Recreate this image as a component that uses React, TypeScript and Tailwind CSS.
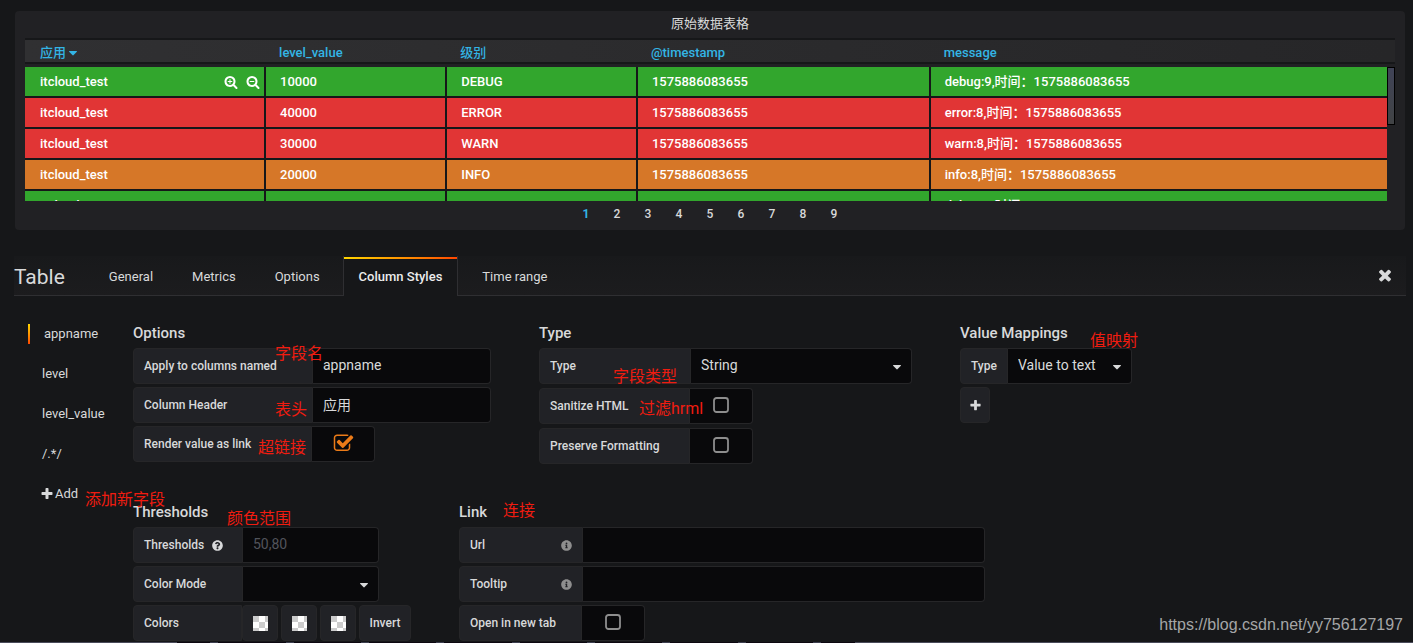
import React, { useState } from "react";
import { FaInfoCircle, FaQuestionCircle } from "react-icons/fa";

interface LogRow {
  app: string;
  value: string;
  level: string;
  timestamp: string;
  message: string;
  color: string;
}

const GREEN = "bg-[#32a62d]";
const RED = "bg-[#e13535]";
const ORANGE = "bg-[#d67728]";

const rows: LogRow[] = [
  { app: "itcloud_test", value: "10000", level: "DEBUG", timestamp: "1575886083655", message: "debug:9,时间：1575886083655", color: GREEN },
  { app: "itcloud_test", value: "40000", level: "ERROR", timestamp: "1575886083655", message: "error:8,时间：1575886083655", color: RED },
  { app: "itcloud_test", value: "30000", level: "WARN", timestamp: "1575886083655", message: "warn:8,时间：1575886083655", color: RED },
  { app: "itcloud_test", value: "20000", level: "INFO", timestamp: "1575886083655", message: "info:8,时间：1575886083655", color: ORANGE },
  { app: "itcloud_test", value: "10000", level: "DEBUG", timestamp: "1575886083655", message: "debug:8,时间：1575886083655", color: GREEN },
];

const pages = [1, 2, 3, 4, 5, 6, 7, 8, 9];
const tabs = ["General", "Metrics", "Options", "Column Styles", "Time range"];
const styleNames = ["appname", "level", "level_value", "/.*/"];

// Shared styling
const labelClass = "flex h-9 shrink-0 items-center rounded-l-sm border border-[#262628] bg-[#212226] px-2.5 text-xs font-medium";
const inputClass = "h-9 w-full min-w-0 appearance-none rounded-r-sm border border-l-0 border-[#262628] bg-[#09090b] px-2.5 pb-0.5 text-sm outline-none placeholder:text-[#52545c]";
const headingClass = "mb-1 pt-0.5 text-[15px] leading-[22px] font-medium";
const noteClass = "pointer-events-none absolute z-10 text-base leading-[22px] whitespace-nowrap text-[#f01c10]";
const buttonClass = "flex h-9 items-center justify-center rounded-sm border border-[#262628] bg-[#212226] text-xs font-medium";

function Glyph({ d, className }: { d: string; className: string }) {
  return (
    <svg viewBox="0 0 1792 1792" fill="currentColor" className={className} aria-hidden="true">
      <path d={d} />
    </svg>
  );
}

const caretPath =
  "M1408 704q0 26-19 45l-448 448q-19 19-45 19t-45-19l-448-448q-19-19-19-45t19-45 45-19h896q26 0 45 19t19 45z";
const plusPath =
  "M1600 736v192q0 40-28 68t-68 28h-416v416q0 40-28 68t-68 28h-192q-40 0-68-28t-28-68v-416h-416q-40 0-68-28t-28-68v-192q0-40 28-68t68-28h416v-416q0-40 28-68t68-28h192q40 0 68 28t28 68v416h416q40 0 68 28t28 68z";
const timesPath =
  "M1490 1322q0 40-28 68l-136 136q-28 28-68 28t-68-28l-294-294-294 294q-28 28-68 28t-68-28l-136-136q-28-28-28-68t28-68l294-294-294-294q-28-28-28-68t28-68l136-136q28-28 68-28t68 28l294 294 294-294q28-28 68-28t68 28l136 136q28 28 28 68t-28 68l-294 294 294 294q28 28 28 68z";
const lensPath =
  "M1216 832q0-185-131.5-316.5t-316.5-131.5-316.5 131.5-131.5 316.5 131.5 316.5 316.5 131.5 316.5-131.5 131.5-316.5zm512 832q0 53-37.5 90.5t-90.5 37.5q-54 0-90-38l-343-342q-179 124-399 124-143 0-273.5-55.5t-225-150-150-225-55.5-273.5 55.5-273.5 150-225 225-150 273.5-55.5 273.5 55.5 225 150 150 225 55.5 273.5q0 220-124 399l343 343q37 37 37 90z";
const zoomInPath = lensPath + "M480 768h224v-224h128v224h224v128h-224v224h-128v-224h-224z";
const zoomOutPath = lensPath + "M480 768h576v128h-576z";
const checkedPath =
  "M1472 930v318q0 119-84.5 203.5t-203.5 84.5h-832q-119 0-203.5-84.5t-84.5-203.5v-832q0-119 84.5-203.5t203.5-84.5h832q63 0 117 25 15 7 18 23 3 17-9 29l-49 49q-10 10-23 10-3 0-9-2-23-6-45-6h-832q-66 0-113 47t-47 113v832q0 66 47 113t113 47h832q66 0 113-47t47-113v-254q0-13 9-22l64-64q10-10 23-10 6 0 12 3 20 8 20 29zm231-489l-814 814q-24 24-57 24t-57-24l-430-430q-24-24-24-57t24-57l110-110q24-24 57-24t57 24l263 263 647-647q24-24 57-24t57 24l110 110q24 24 24 57t-24 57z";

interface CheckRowProps {
  id: string;
  label: string;
  labelWidth: string;
  defaultChecked?: boolean;
}

function CheckRow({ id, label, labelWidth, defaultChecked = false }: CheckRowProps) {
  const [checked, setChecked] = useState(defaultChecked);

  return (
    <div className="flex">
      <label htmlFor={id} className={`${labelClass} ${labelWidth}`}>{label}</label>
      <div className="relative flex h-9 w-[63px] items-center justify-center rounded-r-sm border border-l-0 border-[#262628] bg-[#09090b] pb-0.5">
        <input
          id={id}
          type="checkbox"
          checked={checked}
          onChange={(e) => setChecked(e.target.checked)}
          className="absolute inset-0 h-full w-full cursor-pointer appearance-none"
        />
        {checked ? (
          <Glyph d={checkedPath} className="pointer-events-none size-[21px] text-[#eb7b18]" />
        ) : (
          <svg viewBox="0 0 16 16" className="pointer-events-none size-4" aria-hidden="true">
            <rect x="1" y="1" width="14" height="14" rx="2.5" fill="none" stroke="#8e8e8e" strokeWidth="1.8" />
          </svg>
        )}
      </div>
    </div>
  );
}

interface SelectRowProps {
  id: string;
  label: string;
  labelWidth: string;
  width: string;
  options: string[];
}

function SelectRow({ id, label, labelWidth, width, options }: SelectRowProps) {
  return (
    <div className="flex">
      <label htmlFor={id} className={`${labelClass} ${labelWidth}`}>{label}</label>
      <div className={`relative ${width}`}>
        <select id={id} className={inputClass}>
          {options.map((o) => (
            <option key={o}>{o}</option>
          ))}
        </select>
        <Glyph d={caretPath} className="pointer-events-none absolute top-3 right-2 size-[14px]" />
      </div>
    </div>
  );
}

function TablePanel() {
  const thClass = "border-y-2 border-[#161719] pt-1 pl-[13px] text-left leading-[18px] font-medium first:pl-[15px]";
  const tdClass = "h-[31px] border-r-2 border-b-2 border-[#161719] pl-3.5 font-medium text-white first:pl-[15px] last:border-r-0";

  return (
    <section className="rounded-sm bg-[#212124] px-2.5 pb-[3px]">
      <h2 className="flex h-[27px] items-center justify-center pb-0.5 text-[13px] font-normal">原始数据表格</h2>
      <div className="flex h-[163px] overflow-hidden">
        <table className="w-full flex-1 table-fixed border-separate border-spacing-0 self-start">
          <thead>
            <tr className="h-[26px] bg-linear-to-r from-[#303032] to-[#262628] text-[#33b5e5]">
              <th className={`${thClass} w-[17.7%]`}>
                <span className="flex items-center">
                  应用
                  <Glyph d={caretPath} className="size-[14px]" />
                </span>
              </th>
              <th className={`${thClass} w-[13.3%]`}>level_value</th>
              <th className={`${thClass} w-[14%]`}>级别</th>
              <th className={`${thClass} w-[21.5%]`}>@timestamp</th>
              <th className={thClass}>message</th>
            </tr>
          </thead>
          <tbody className="before:block before:h-[3px] before:content-['']">
            {rows.map((row, i) => (
              <tr key={i} className={row.color}>
                <td className={tdClass}>
                  <div className="flex items-center justify-between pr-1">
                    {row.app}
                    {i === 0 && (
                      <span className="flex gap-2">
                        <button aria-label="Filter for value"><Glyph d={zoomInPath} className="size-[14px]" /></button>
                        <button aria-label="Filter out value"><Glyph d={zoomOutPath} className="size-[14px]" /></button>
                      </span>
                    )}
                  </div>
                </td>
                <td className={tdClass}>{row.value}</td>
                <td className={tdClass}>{row.level}</td>
                <td className={tdClass}>{row.timestamp}</td>
                <td className={tdClass}>{row.message}</td>
              </tr>
            ))}
          </tbody>
        </table>
        {/* Scrollbar */}
        <div className="w-2 shrink-0">
          <div className="mb-[3px] h-[26px] border-y-2 border-[#161719] bg-[#262628]" />
          <div className="h-[58px] border border-black bg-linear-to-b from-[#404357] to-[#414345]" />
        </div>
      </div>
      <nav className="flex h-[26px] items-center justify-center text-xs font-medium">
        {pages.map((p) => (
          <button key={p} className={p === 1 ? "w-[31px] font-bold text-[#33b5e5]" : "w-[31px]"}>{p}</button>
        ))}
      </nav>
    </section>
  );
}

export default function App() {
  const [activeTab, setActiveTab] = useState("Column Styles");

  return (
    <div className="relative flex h-screen flex-col overflow-hidden bg-[#161719] font-['Roboto','Noto_Sans_CJK_SC',sans-serif] text-[13px] leading-5 text-[#d8d9da]">
      <div className="px-[15px] pt-[11px] pr-2 pb-[26px]">
        <TablePanel />
      </div>

      {/* Tab bar */}
      <header className="mr-[7px] ml-3.5 flex h-10 shrink-0 border-b border-[#2f2f32] bg-linear-to-b from-[#18191b] to-[#1c1c1e]">
        <h1 className="mr-7 flex items-center pt-0.5 text-[21px]">Table</h1>
        <nav className="flex">
          {tabs.map((tab) =>
            tab === activeTab ? (
              <button key={tab} className="relative mr-2 h-10 border-x border-[#2f2f32] bg-[#161719] px-[15px] pt-0.5 font-medium text-[#ececec]">
                <span className="absolute inset-x-0 top-px h-0.5 bg-linear-to-r from-[#ffd500] to-[#ff4400]" />
                {tab}
              </button>
            ) : (
              <button key={tab} onClick={() => setActiveTab(tab)} className="mr-[7px] px-4 pt-0.5 last:mr-0">{tab}</button>
            )
          )}
        </nav>
        <button aria-label="Close" className="mr-3 ml-auto pb-0.5"><Glyph d={timesPath} className="size-[18px]" /></button>
      </header>

      <div className="flex pt-6">
        {/* Column style list */}
        <aside className="relative w-[133px] shrink-0 pl-7">
          <ul>
            {styleNames.map((name, i) => (
              <li key={name} className="flex h-10 items-start pt-1">
                {i === 0 && <span className="h-5 w-0.5 bg-linear-to-b from-[#ffd500] to-[#ff4400]" />}
                <a href="#" className="px-3.5">{name}</a>
              </li>
            ))}
          </ul>
          <button className="mt-1 ml-3 flex items-center gap-px">
            <Glyph d={plusPath} className="size-[14px]" />
            Add
          </button>
          <span className={`${noteClass} top-[169px] left-[85px]`}>添加新字段</span>
        </aside>

        <div className="grow">
          <div className="flex gap-12">
            {/* Options */}
            <section className="relative w-[358px]">
              <h3 className={headingClass}>Options</h3>
              <div className="flex flex-col gap-[3px]">
                <div className="flex">
                  <label htmlFor="pattern" className={`${labelClass} w-[180px]`}>Apply to columns named</label>
                  <input id="pattern" defaultValue="appname" className={inputClass} />
                </div>
                <div className="flex">
                  <label htmlFor="header" className={`${labelClass} w-[180px]`}>Column Header</label>
                  <input id="header" defaultValue="应用" className={inputClass} />
                </div>
                <CheckRow id="link" label="Render value as link" labelWidth="w-[179px]" defaultChecked />
              </div>
              <span className={`${noteClass} top-[23px] left-[142px]`}>字段名</span>
              <span className={`${noteClass} top-[79px] left-[142px]`}>表头</span>
              <span className={`${noteClass} top-[117px] left-[125px]`}>超链接</span>
            </section>

            {/* Type */}
            <section className="relative w-[373px]">
              <h3 className={headingClass}>Type</h3>
              <div className="flex flex-col gap-1">
                <SelectRow id="type" label="Type" labelWidth="w-[152px]" width="grow" options={["String", "Number", "Date", "Hidden"]} />
                <CheckRow id="sanitize" label="Sanitize HTML" labelWidth="w-[151px]" />
                <CheckRow id="preserve" label="Preserve Formatting" labelWidth="w-[151px]" />
              </div>
              <span className={`${noteClass} top-[46px] left-[74px]`}>字段类型</span>
              <span className={`${noteClass} top-[78px] left-[100px]`}>过滤hrml</span>
            </section>

            {/* Value mappings */}
            <section className="relative">
              <h3 className={headingClass}>Value Mappings</h3>
              <div className="flex flex-col gap-[3px]">
                <SelectRow id="mapping" label="Type" labelWidth="w-12" width="w-[124px]" options={["Value to text", "Range to text"]} />
                <button aria-label="Add mapping" className={`${buttonClass} w-[30px]`}>
                  <Glyph d={plusPath} className="size-[13px]" />
                </button>
              </div>
              <span className={`${noteClass} top-[10px] left-[130px]`}>值映射</span>
            </section>
          </div>

          <div className="mt-[35px] flex gap-12">
            {/* Thresholds */}
            <section className="relative w-[278px]">
              <h3 className={headingClass}>Thresholds</h3>
              <div className="flex flex-col gap-[3px]">
                <div className="flex w-[246px]">
                  <label htmlFor="thresholds" className={`${labelClass} w-[110px] gap-2`}>
                    Thresholds
                    <FaQuestionCircle className="size-[11px]" />
                  </label>
                  <input id="thresholds" placeholder="50,80" className={inputClass} />
                </div>
                <SelectRow id="colorMode" label="Color Mode" labelWidth="w-[110px]" width="w-[136px]" options={["", "Cell", "Value", "Row"]} />
                <div className="flex gap-[3px]">
                  <div className="flex">
                    <span className={`${labelClass} w-[109px]`}>Colors</span>
                    <ColorButton name="Color 1" />
                  </div>
                  <ColorButton name="Color 2" />
                  <ColorButton name="Color 3" />
                  <button className={`${buttonClass} w-[52px]`}>Invert</button>
                </div>
              </div>
              <span className={`${noteClass} top-[9px] left-[94px]`}>颜色范围</span>
            </section>

            {/* Link */}
            <section className="relative w-[526px]">
              <h3 className={headingClass}>Link</h3>
              <div className="flex flex-col gap-[3px]">
                {["Url", "Tooltip"].map((name) => (
                  <div key={name} className="flex">
                    <label htmlFor={name} className={`${labelClass} w-[124px] justify-between`}>
                      {name}
                      <FaInfoCircle className="size-[11px] text-[#8e8e8e]" />
                    </label>
                    <input id={name} className={inputClass} />
                  </div>
                ))}
                <CheckRow id="newTab" label="Open in new tab" labelWidth="w-[123px]" />
              </div>
              <span className={`${noteClass} top-[1px] left-[44px]`}>连接</span>
            </section>
          </div>
        </div>
      </div>

      {/* Bottom edge */}
      <div className="mt-auto flex h-px shrink-0">
        <div className="w-1/8 bg-[#4a4b5a]" />
        <div className="flex w-12/25 justify-around bg-[#0c0710]">
          {pages.map((p) => (
            <span key={p} className="w-2 bg-[#3d3f4f]" />
          ))}
        </div>
        <div className="grow bg-[#4a4b5a]" />
      </div>
      <span className="absolute right-2.5 bottom-1.5 font-['Liberation_Sans',sans-serif] text-base leading-6 text-[#a5a6a7]">
        https://blog.csdn.net/yy756127197
      </span>
    </div>
  );
}

function ColorButton({ name }: { name: string }) {
  return (
    <button aria-label={name} className={`${buttonClass} w-9`}>
      <svg viewBox="0 0 15 15" className="size-[15px]" aria-hidden="true">
        <rect width="15" height="15" fill="#fff" />
        <path d="M0 0h6v6h-6zM12 0h3v6h-3zM6 6h6v6h-6zM0 12h6v3h-6zM12 12h3v3h-3z" fill="#ccc" />
      </svg>
    </button>
  );
}
